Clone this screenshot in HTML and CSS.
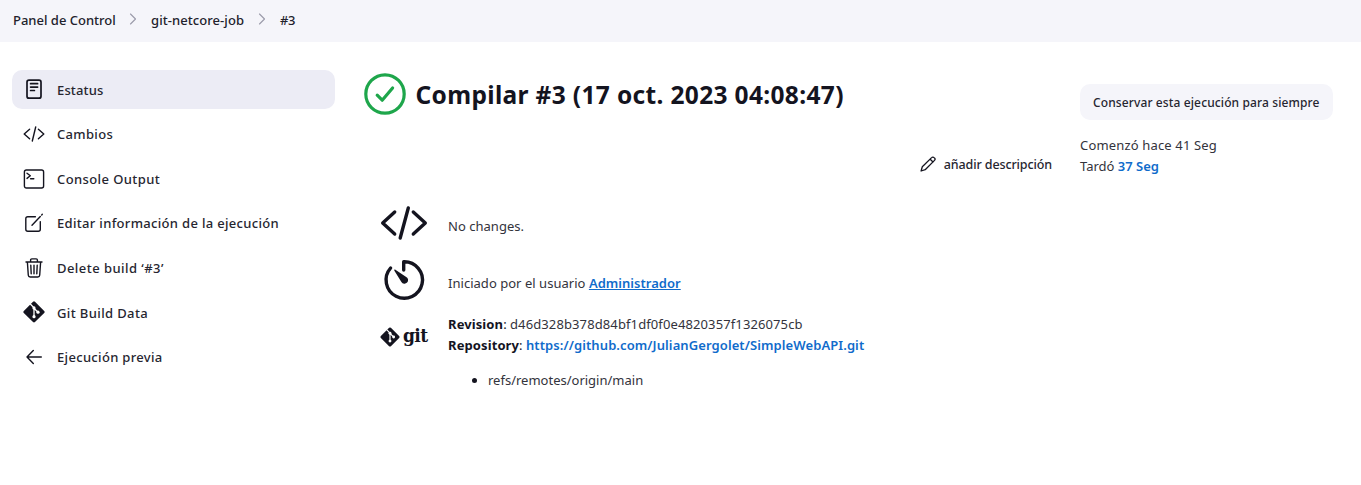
FILE: index.html
```html
<!DOCTYPE html>
<html lang="es">
<head>
<meta charset="utf-8">
<title>Compilar #3</title>
<link rel="stylesheet" href="styles.css">
</head>
<body>
<nav class="breadcrumbs">
  <a class="crumb crumb-home">Panel de Control</a>
  <svg class="chevron" viewBox="0 0 8 12"><path d="M1.5 1l5 5-5 5"/></svg>
  <a class="crumb crumb-job">git-netcore-job</a>
  <svg class="chevron" viewBox="0 0 8 12"><path d="M1.5 1l5 5-5 5"/></svg>
  <a class="crumb crumb-build">#3</a>
</nav>
<div class="page">
  <aside class="tasks">
    <a class="task active"><svg class="icon" viewBox="0 0 22 22"><rect class="thick" x="4" y="1.2" width="14" height="18" rx="2"/><path class="thick" d="M7.6 4.7h7M7.6 8.1h7M7.6 11.5h3.8"/></svg><span class="t-status">Estatus</span></a>
    <a class="task"><svg class="icon" viewBox="0 0 22 22"><path d="M6.6 6.2L1.2 11l5.4 4.8M15.4 6.2l5.4 4.8-5.4 4.8M12.7 4L9.3 18"/></svg><span class="t-changes">Cambios</span></a>
    <a class="task"><svg class="icon" viewBox="0 0 22 22"><rect x="1.4" y="2" width="19.2" height="18" rx="2"/><path d="M4 5.2l3.3 2.6L4 10.4M7.6 10.8h3.2"/></svg><span class="t-console">Console Output</span></a>
    <a class="task"><svg class="icon" viewBox="0 0 22 22"><path d="M12.4 4.7H4.8a2 2 0 0 0-2 2v10.5a2 2 0 0 0 2 2h10.5a2 2 0 0 0 2-2V9.6M9 13.3l8.3-8.7M18.7 2.9l.6-.6"/></svg><span class="t-edit">Editar información de la ejecución</span></a>
    <a class="task"><svg class="icon" viewBox="0 0 22 22"><path d="M4.4 5.2l.9 13a2 2 0 0 0 1.9 1.8h7.6a2 2 0 0 0 1.9-1.8l.9-13M3 5h16M7.6 5V3.1a1.2 1.2 0 0 1 1.2-1.2h4.4a1.2 1.2 0 0 1 1.2 1.2V5M11 8.3v8.5M7.8 8.3l.4 8.5M14.2 8.3l-.4 8.5"/></svg><span class="t-delete">Delete build ‘#3’</span></a>
    <a class="task"><svg class="icon" viewBox="0 0 22 22"><rect class="solid" x="3.1" y="3" width="15.8" height="15.8" rx="1.4" transform="rotate(45 11 10.9)"/><path class="cut" d="M7.6 3.3l3.4 3.6v9M11 7.3l4 4"/><circle class="dot" cx="11" cy="6.9" r="1.6"/><circle class="dot" cx="11" cy="15.7" r="1.6"/><circle class="dot" cx="15" cy="11.2" r="1.6"/></svg><span class="t-git">Git Build Data</span></a>
    <a class="task"><svg class="icon" viewBox="0 0 22 22"><path d="M10.3 4.5L4 11l6.3 6.5M4 11h14.3"/></svg><span class="t-prev">Ejecución previa</span></a>
  </aside>
  <main class="main">
    <section class="content">
      <header class="title-row">
        <svg class="result" viewBox="0 0 42 42"><circle cx="21" cy="21" r="19.2"/><path d="M13.2 22.2l5 5L28.6 15"/></svg>
        <h1 class="title">Compilar #3 (17 oct. 2023 04:08:47)</h1>
      </header>
      <a class="describe"><svg class="pencil" viewBox="0 0 16 16"><path d="M1.1 15l1.2-4.2L11.6 1.6a1.7 1.7 0 0 1 2.5 0l.4.4a1.7 1.7 0 0 1 0 2.4L5.2 13.7zM10.2 3.2l2.8 2.8"/></svg><span class="t-describe">añadir descripción</span></a>
      <div class="summary">
        <div class="entry">
          <svg class="big" viewBox="0 0 48 48"><path d="M14.7 13L2.7 24l12 11M33.3 13l12 11-12 11M28.3 9L20.2 39"/></svg>
          <p class="text"><span class="t-none">No changes.</span></p>
        </div>
        <div class="entry">
          <svg class="big" viewBox="0 0 48 48"><path d="M23.7 14V5.8A18.2 18.2 0 1 1 10.6 12"/><path class="solid" d="M14.4 14.7c-.5-.8.3-1.5 1-1l10.8 7.2a3.6 3.6 0 1 1-4.8 5z"/></svg>
          <p class="text"><span class="t-started">Iniciado por el usuario </span><a class="link underline t-admin">Administrador</a></p>
        </div>
        <div class="entry git-entry">
          <div class="git-logo"><svg class="git-mark" viewBox="0 0 22 22"><rect class="solid" x="3.2" y="3.2" width="15.6" height="15.6" rx="1.4" transform="rotate(45 11 11)"/><path class="cut" d="M7.6 3.2L11 6.8v9M11 7l4 4"/><circle class="dot" cx="11" cy="6.8" r="1.6"/><circle class="dot" cx="11" cy="15.5" r="1.6"/><circle class="dot" cx="15" cy="11" r="1.6"/></svg><span class="git-word">git</span></div>
          <div class="details">
            <div class="line"><b class="t-rev">Revision</b>: <span class="t-hash">d46d328b378d84bf1df0f0e4820357f1326075cb</span></div>
            <div class="line"><b class="t-repo">Repository</b>: <a class="link t-url">https://github.com/JulianGergolet/SimpleWebAPI.git</a></div>
            <ul class="refs"><li><span class="t-ref">refs/remotes/origin/main</span></li></ul>
          </div>
        </div>
      </div>
    </section>
    <aside class="info">
      <button class="keep"><span class="t-keep">Conservar esta ejecución para siempre</span></button>
      <div class="line t-began">Comenzó hace 41 Seg</div>
      <div class="line"><span class="t-took">Tardó</span> <a class="link t-dur">37 Seg</a></div>
    </aside>
  </main>
</div>
</body>
</html>
```
FILE: styles.css
```css
* { box-sizing: border-box; }
body { margin: 0; background: #fff; color: #14141f; font-family: "Noto Sans", "Open Sans", sans-serif; font-size: 13px; line-height: 21px; white-space: nowrap; }
svg { fill: none; stroke: #14141f; stroke-linecap: round; stroke-linejoin: round; flex: none; }
.solid { fill: #14141f; stroke: none; }
.cut { stroke: #fff; stroke-width: 1.3; }
.dot { fill: #fff; stroke: none; }
.breadcrumbs { display: flex; align-items: center; height: 42px; padding: 0 0 2px 13px; background: #f5f5fa; color: #22222c; font-weight: 500; }
.crumb-home { width: 102px; }
.crumb-job { width: 93px; letter-spacing: .07px; }
.crumb-build { letter-spacing: -.4px; }
.chevron { width: 8px; height: 12px; margin: 0 14px 2px; stroke: #9a9aaa; stroke-width: 1.1; }
.page { display: flex; padding: 28px 28px 0 12px; }
.tasks { display: flex; flex-direction: column; gap: 5.6px; width: 323px; flex: none; letter-spacing: .32px; }
.task { display: flex; align-items: center; gap: 12px; height: 39px; padding-left: 11px; border-radius: 10px; color: #262630; font-weight: 500; }
.active { background: #ececf5; }
.t-status { letter-spacing: .15px; padding-top: 1px; }
.t-console { letter-spacing: .4px; padding-top: 1px; }
.t-delete { letter-spacing: .45px; padding-top: 1px; }
.t-git { letter-spacing: .38px; padding-top: 2px; }
.icon { width: 22px; height: 22px; stroke-width: 1.4; }
.thick { stroke-width: 1.7; }
.main { display: flex; flex: 1; margin-left: 29px; justify-content: space-between; }
.content { width: 688px; }
.title-row { display: flex; align-items: center; gap: 9.5px; margin-top: 3px; height: 42px; }
.result { width: 42px; height: 42px; stroke: #1ea64b; stroke-width: 3.2; }
.title { margin: 0; padding-top: 2px; font-size: 24.5px; line-height: 32px; font-weight: 700; letter-spacing: .34px; }
.describe { display: flex; justify-content: flex-end; align-items: center; gap: 8px; margin-top: 38px; color: #262630; font-weight: 500; height: 22px; }
.t-describe { font-size: 12.5px; letter-spacing: -.12px; }
.pencil { width: 16px; height: 16px; stroke-width: 1.3; }
.summary { margin: 24px 0 0 16px; }
.entry { display: flex; gap: 20px; height: 57px; }
.big { width: 48px; height: 48px; stroke-width: 3.4; }
.text { margin: 0; padding-top: 17px; letter-spacing: .03px; }
.t-none, .t-started, .t-hash, .t-ref, .t-began, .t-took { color: #33333c; }
.link { color: #106bcb; font-weight: 600; }
.underline { text-decoration: underline; }
.git-entry { height: auto; }
.details { padding-top: 1px; }
.t-rev, .t-repo { letter-spacing: .1px; }
.git-logo { display: flex; align-items: center; width: 48px; height: 48px; }
.git-mark { width: 20px; height: 20px; }
.git-word { margin: -4px 0 0 3px; font: bold 19px/20px "DejaVu Serif Condensed", "DejaVu Serif", serif; letter-spacing: -.6px; }
.t-hash { letter-spacing: .11px; }
.t-url { letter-spacing: .09px; }
.refs { margin: 14px 0 0; padding-left: 40px; }
.info { width: 253px; margin-top: 14px; }
.keep { display: block; width: 253px; height: 36px; margin-bottom: 15px; padding: 2px 13px 0; border: 0; border-radius: 10px; background: #f5f5fa; color: #262630; font: 500 12px/20px "Noto Sans", sans-serif; letter-spacing: .12px; text-align: left; }
.t-began { letter-spacing: .16px; }
```
